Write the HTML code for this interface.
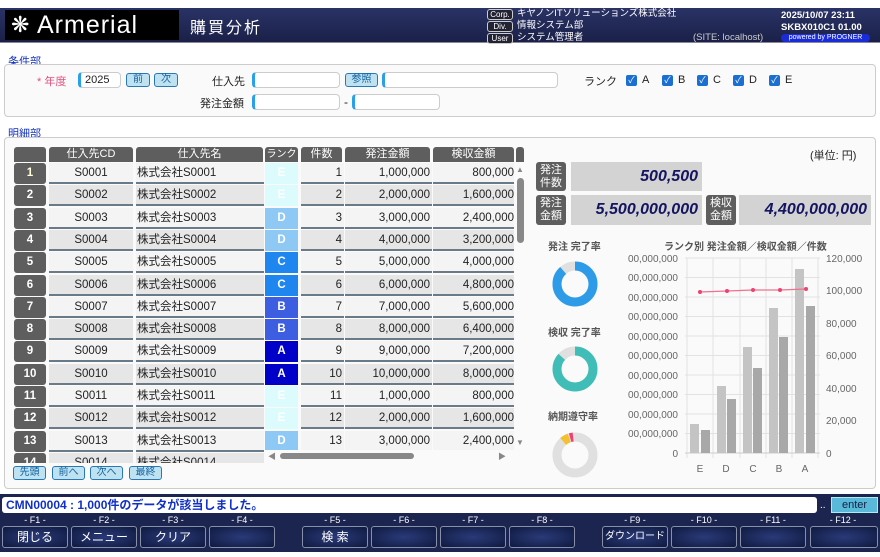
<!DOCTYPE html>
<html><head><meta charset="utf-8"><style>
*{box-sizing:border-box;margin:0;padding:0}
body{width:880px;height:557px;overflow:hidden;background:#fff;font-family:"Liberation Sans","Noto Sans CJK JP",sans-serif;font-size:12px;color:#222;position:relative}
.a{position:absolute}
.hdr{left:0;top:8px;width:880px;height:35px;background:linear-gradient(#2a3366,#1a2048);border-bottom:1px solid #889}
.logo{left:5px;top:10px;width:174px;height:30px;background:#000;color:#fff;font-size:25px;line-height:30px;padding-left:32px;letter-spacing:1px}
.ttl{left:190px;top:14px;color:#fff;font-size:16px;letter-spacing:2px}
.tag{left:487px;width:26px;height:11px;border:1px solid #ccc;border-radius:3px;color:#fff;font-size:8px;line-height:9px;text-align:center;background:#223}
.ht{color:#fff;font-size:9.5px;line-height:11px}
.sec{border:1px solid #ccc;border-radius:4px;background:#fafafa}
.lbl{color:#1030c0;font-size:11px}
.inp{height:16px;border:1px solid #ccc;border-left:3px solid #2aa0e8;border-radius:4px;background:#fff;font-size:11px;line-height:14px;padding-left:4px}
.btn{height:14px;border:1px solid #2878b8;border-radius:3px;background:#bfe2f0;color:#1060a0;font-size:10px;line-height:12px;text-align:center}
.cb{width:11px;height:11px;background:#1a6fd0;border-radius:2px;color:#fff;font-size:9px;line-height:11px;text-align:center}
.th{top:147px;height:15px;background:#5e5e5e;color:#fff;text-align:center;font-size:11px;line-height:15px;border-radius:3px 3px 0 0;overflow:hidden;white-space:nowrap}
.r{left:14px;width:500px;height:21px;font-size:11.5px}
.r div{position:absolute;top:0;height:21px;line-height:21px}
.n{left:0;width:32px;background:#5e5e5e;color:#fff;text-align:center;font-weight:bold;border-radius:3px}
.c1{left:35px;width:84px;text-align:center}
.c2{left:122px;width:128px;padding-left:1px}
.c3{left:251px;width:33px;text-align:center;color:#fff;font-weight:bold}
.c4{left:287px;width:43px;text-align:right;padding-right:2px}
.c5{left:331px;width:87px;text-align:right;padding-right:2px}
.c6{left:419px;width:81px;text-align:right;white-space:nowrap;overflow:hidden}
.ev{background:#f4f4f4}.od{background:#e6e6e6}
.line{border-bottom:2px solid #6a7a88}
.E{background:#dcfbfd}.D{background:#8ec9f6}.C{background:#1f86f0}.B{background:#3d5ee0}.A{background:#0000c8}
.kl{background:#5e5e5e;color:#fff;font-size:11px;line-height:13px;text-align:center;border-radius:3px;padding-top:2px}
.kv{background:#d3d3d3;color:#141460;font-weight:bold;font-style:italic;font-size:16px;text-align:right;padding-right:4px}
.fk{top:526px;height:22px;border:1px solid #8890a8;border-radius:3px;background:radial-gradient(#2a3a78,#0f1a40);color:#fff;font-size:12px;line-height:20px;text-align:center;white-space:nowrap;overflow:hidden}
.fl{top:515px;color:#fff;font-size:9px;text-align:center;width:66px}
</style></head><body>
<div class="a hdr"></div>
<div class="a logo"><span class="a" style="left:6px;top:0;font-size:22px">❋</span>Armerial</div>
<div class="a ttl">購買分析</div>
<div class="a tag" style="top:9px">Corp.</div><div class="a tag" style="top:21px">Div.</div><div class="a tag" style="top:33px">User</div>
<div class="a ht" style="left:517px;top:8px">キヤノンITソリューションズ株式会社</div>
<div class="a ht" style="left:517px;top:20px">情報システム部</div>
<div class="a ht" style="left:517px;top:32px">システム管理者</div>
<div class="a ht" style="left:693px;top:32px;color:#ccc">(SITE: localhost)</div>
<div class="a ht" style="left:781px;top:10px;font-weight:bold">2025/10/07 23:11</div>
<div class="a ht" style="left:781px;top:22px;font-weight:bold">SKBX010C1 01.00</div>
<div class="a" style="left:781px;top:34px;width:89px;height:8px;background:#1a2cd8;border-radius:4px;color:#fff;font-size:7px;line-height:8px;text-align:center">powered by PROGNER</div>

<div class="a lbl" style="left:8px;top:53px">条件部</div>
<div class="a sec" style="left:4px;top:64px;width:872px;height:53px"></div>
<div class="a" style="left:37px;top:73px;color:#e05080;font-size:11px">* 年度</div>
<div class="a inp" style="left:78px;top:72px;width:43px">2025</div>
<div class="a btn" style="left:126px;top:73px;width:24px">前</div>
<div class="a btn" style="left:154px;top:73px;width:24px">次</div>
<div class="a" style="left:212px;top:73px;font-size:11px">仕入先</div>
<div class="a inp" style="left:252px;top:72px;width:88px"></div>
<div class="a btn" style="left:345px;top:73px;width:33px">参照</div>
<div class="a inp" style="left:382px;top:72px;width:176px"></div>
<div class="a" style="left:584px;top:73px;font-size:11px">ランク</div>
<div class="a cb" style="left:626px;top:75px">✓</div><div class="a" style="left:642px;top:74px;font-size:11px">A</div>
<div class="a cb" style="left:662px;top:75px">✓</div><div class="a" style="left:678px;top:74px;font-size:11px">B</div>
<div class="a cb" style="left:697px;top:75px">✓</div><div class="a" style="left:713px;top:74px;font-size:11px">C</div>
<div class="a cb" style="left:733px;top:75px">✓</div><div class="a" style="left:749px;top:74px;font-size:11px">D</div>
<div class="a cb" style="left:769px;top:75px">✓</div><div class="a" style="left:785px;top:74px;font-size:11px">E</div>
<div class="a" style="left:200px;top:95px;font-size:11px">発注金額</div>
<div class="a inp" style="left:252px;top:94px;width:88px"></div>
<div class="a" style="left:344px;top:95px">-</div>
<div class="a inp" style="left:352px;top:94px;width:88px"></div>

<div class="a lbl" style="left:8px;top:125px">明細部</div>
<div class="a sec" style="left:4px;top:137px;width:872px;height:352px"></div>
<div class="a th" style="left:14px;width:32px"></div>
<div class="a th" style="left:49px;width:84px">仕入先CD</div>
<div class="a th" style="left:136px;width:127px">仕入先名</div>
<div class="a th" style="left:265px;width:33px;font-size:10px">ランク</div>
<div class="a th" style="left:301px;width:41px">件数</div>
<div class="a th" style="left:345px;width:85px">発注金額</div>
<div class="a th" style="left:433px;width:81px">検収金額</div>
<div class="a th" style="left:516px;width:8px"></div>

<div class="a" style="left:0;top:163px;width:530px;height:300px;overflow:hidden">
<div class="a r" style="top:0"><div class="n" style="color:#ffd">1</div><div class="c1 ev line">S0001</div><div class="c2 ev line">株式会社S0001</div><div class="c3 E">E</div><div class="c4 ev line">1</div><div class="c5 ev line">1,000,000</div><div class="c6 ev line">800,000</div></div>
<div class="a r" style="top:22.3px"><div class="n">2</div><div class="c1 od line">S0002</div><div class="c2 od line">株式会社S0002</div><div class="c3 E">E</div><div class="c4 od line">2</div><div class="c5 od line">2,000,000</div><div class="c6 od line">1,600,000</div></div>
<div class="a r" style="top:44.6px"><div class="n">3</div><div class="c1 ev line">S0003</div><div class="c2 ev line">株式会社S0003</div><div class="c3 D">D</div><div class="c4 ev line">3</div><div class="c5 ev line">3,000,000</div><div class="c6 ev line">2,400,000</div></div>
<div class="a r" style="top:66.9px"><div class="n">4</div><div class="c1 od line">S0004</div><div class="c2 od line">株式会社S0004</div><div class="c3 D">D</div><div class="c4 od line">4</div><div class="c5 od line">4,000,000</div><div class="c6 od line">3,200,000</div></div>
<div class="a r" style="top:89.2px"><div class="n">5</div><div class="c1 ev line">S0005</div><div class="c2 ev line">株式会社S0005</div><div class="c3 C">C</div><div class="c4 ev line">5</div><div class="c5 ev line">5,000,000</div><div class="c6 ev line">4,000,000</div></div>
<div class="a r" style="top:111.5px"><div class="n">6</div><div class="c1 od line">S0006</div><div class="c2 od line">株式会社S0006</div><div class="c3 C">C</div><div class="c4 od line">6</div><div class="c5 od line">6,000,000</div><div class="c6 od line">4,800,000</div></div>
<div class="a r" style="top:133.8px"><div class="n">7</div><div class="c1 ev line">S0007</div><div class="c2 ev line">株式会社S0007</div><div class="c3 B">B</div><div class="c4 ev line">7</div><div class="c5 ev line">7,000,000</div><div class="c6 ev line">5,600,000</div></div>
<div class="a r" style="top:156.1px"><div class="n">8</div><div class="c1 od line">S0008</div><div class="c2 od line">株式会社S0008</div><div class="c3 B">B</div><div class="c4 od line">8</div><div class="c5 od line">8,000,000</div><div class="c6 od line">6,400,000</div></div>
<div class="a r" style="top:178.4px"><div class="n">9</div><div class="c1 ev line">S0009</div><div class="c2 ev line">株式会社S0009</div><div class="c3 A">A</div><div class="c4 ev line">9</div><div class="c5 ev line">9,000,000</div><div class="c6 ev line">7,200,000</div></div>
<div class="a r" style="top:200.7px"><div class="n">10</div><div class="c1 od line">S0010</div><div class="c2 od line">株式会社S0010</div><div class="c3 A">A</div><div class="c4 od line">10</div><div class="c5 od line">10,000,000</div><div class="c6 od line">8,000,000</div></div>
<div class="a r" style="top:223px"><div class="n">11</div><div class="c1 ev line">S0011</div><div class="c2 ev line">株式会社S0011</div><div class="c3 E">E</div><div class="c4 ev line">11</div><div class="c5 ev line">1,000,000</div><div class="c6 ev line">800,000</div></div>
<div class="a r" style="top:245.3px"><div class="n">12</div><div class="c1 od line">S0012</div><div class="c2 od line">株式会社S0012</div><div class="c3 E">E</div><div class="c4 od line">12</div><div class="c5 od line">2,000,000</div><div class="c6 od line">1,600,000</div></div>
<div class="a r" style="top:267.6px"><div class="n">13</div><div class="c1 ev line">S0013</div><div class="c2 ev line">株式会社S0013</div><div class="c3 D">D</div><div class="c4 ev line">13</div><div class="c5 ev line">3,000,000</div><div class="c6 ev line">2,400,000</div></div>
<div class="a r" style="top:289.9px"><div class="n">14</div><div class="c1 od">S0014</div><div class="c2 od">株式会社S0014</div></div>
<div class="a" style="left:264px;top:287px;width:262px;height:13px;background:#fafafa"></div>
</div>
<div class="a" style="left:516px;top:165px;font-size:8px;color:#888">▲</div>
<div class="a" style="left:517px;top:178px;width:7px;height:65px;background:#888;border-radius:4px"></div>
<div class="a" style="left:516px;top:438px;font-size:8px;color:#888">▼</div>
<div class="a" style="left:268px;top:451px;font-size:8px;color:#888">◀</div>
<div class="a" style="left:280px;top:453px;width:134px;height:6px;background:#888;border-radius:3px"></div>
<div class="a" style="left:498px;top:451px;font-size:8px;color:#888">▶</div>
<div class="a btn" style="left:13px;top:466px;width:33px">先頭</div>
<div class="a btn" style="left:52px;top:466px;width:33px">前へ</div>
<div class="a btn" style="left:90px;top:466px;width:33px">次へ</div>
<div class="a btn" style="left:129px;top:466px;width:33px">最終</div>

<div class="a" style="left:810px;top:147px;font-size:11px">(単位: 円)</div>
<div class="a kl" style="left:536px;top:162px;width:30px;height:29px">発注<br>件数</div>
<div class="a kv" style="left:571px;top:162px;width:131px;height:29px;line-height:29px">500,500</div>
<div class="a kl" style="left:536px;top:195px;width:30px;height:30px">発注<br>金額</div>
<div class="a kv" style="left:571px;top:195px;width:131px;height:30px;line-height:30px">5,500,000,000</div>
<div class="a kl" style="left:706px;top:195px;width:30px;height:30px">検収<br>金額</div>
<div class="a kv" style="left:739px;top:195px;width:132px;height:30px;line-height:30px">4,400,000,000</div>
<div class="a" style="left:548px;top:238px;font-size:10px;font-weight:bold;color:#555">発注 完了率</div>
<div class="a" style="left:548px;top:324px;font-size:10px;font-weight:bold;color:#555">検収 完了率</div>
<div class="a" style="left:548px;top:408px;font-size:10px;font-weight:bold;color:#555">納期遵守率</div>
<div class="a" style="left:664px;top:238px;font-size:10px;font-weight:bold;color:#555">ランク別 発注金額／検収金額／件数</div>
<svg class="a" style="left:530px;top:250px" width="350" height="230" viewBox="530 250 350 230">
<g fill="none" stroke-width="9">
<circle cx="575" cy="284" r="18" stroke="#e0e0e0"/>
<circle cx="575" cy="284" r="18" stroke="#2d9be8" stroke-dasharray="100 113" transform="rotate(-90 575 284)"/>
<circle cx="575" cy="369" r="18" stroke="#e0e0e0"/>
<circle cx="575" cy="369" r="18" stroke="#3fbdb6" stroke-dasharray="98 113" transform="rotate(-90 575 369)"/>
<circle cx="575" cy="455" r="18" stroke="#e0e0e0"/>
<circle cx="575" cy="455" r="18" stroke="#f5c030" stroke-dasharray="0 100 7 10" transform="rotate(-90 575 455)"/>
<circle cx="575" cy="455" r="18" stroke="#f04070" stroke-dasharray="0 108 3 10" transform="rotate(-90 575 455)"/>
</g>
<g stroke="#e2e2e2" stroke-width="1">
<line x1="685" y1="258" x2="820" y2="258"/><line x1="685" y1="277.5" x2="820" y2="277.5"/><line x1="685" y1="297" x2="820" y2="297"/><line x1="685" y1="316.5" x2="820" y2="316.5"/><line x1="685" y1="336" x2="820" y2="336"/><line x1="685" y1="355.5" x2="820" y2="355.5"/><line x1="685" y1="375" x2="820" y2="375"/><line x1="685" y1="394.5" x2="820" y2="394.5"/><line x1="685" y1="414" x2="820" y2="414"/><line x1="685" y1="433.5" x2="820" y2="433.5"/>
<line x1="687" y1="258" x2="687" y2="458"/><line x1="713" y1="258" x2="713" y2="458"/><line x1="740" y1="258" x2="740" y2="458"/><line x1="766" y1="258" x2="766" y2="458"/><line x1="792" y1="258" x2="792" y2="458"/><line x1="818" y1="258" x2="818" y2="458"/>
</g>
<line x1="685" y1="453" x2="820" y2="453" stroke="#ccc"/>
<g fill="#c4c4c4"><rect x="690" y="424" width="9" height="29"/><rect x="717" y="386" width="9" height="67"/><rect x="743" y="347" width="9" height="106"/><rect x="769" y="308" width="9" height="145"/><rect x="795" y="269" width="9" height="184"/></g>
<g fill="#a8a8a8"><rect x="701" y="430" width="9" height="23"/><rect x="727" y="399" width="9" height="54"/><rect x="753" y="368" width="9" height="85"/><rect x="779" y="337" width="9" height="116"/><rect x="806" y="306" width="9" height="147"/></g>
<polyline points="700,292 727,291 753,290 780,290 806,289" fill="none" stroke="#f07090" stroke-width="1.2"/>
<g fill="#f04070"><circle cx="700" cy="292" r="2"/><circle cx="727" cy="291" r="2"/><circle cx="753" cy="290" r="2"/><circle cx="780" cy="290" r="2"/><circle cx="806" cy="289" r="2"/></g>
<g font-family="Liberation Sans" font-size="10" fill="#666" text-anchor="end">
<text x="678" y="262">00,000,000</text><text x="678" y="281">00,000,000</text><text x="678" y="301">00,000,000</text><text x="678" y="320">00,000,000</text><text x="678" y="340">00,000,000</text><text x="678" y="359">00,000,000</text><text x="678" y="379">00,000,000</text><text x="678" y="398">00,000,000</text><text x="678" y="418">00,000,000</text><text x="678" y="437">00,000,000</text><text x="678" y="457">0</text>
</g>
<g font-family="Liberation Sans" font-size="10" fill="#666">
<text x="826" y="262">120,000</text><text x="826" y="294">100,000</text><text x="826" y="327">80,000</text><text x="826" y="359">60,000</text><text x="826" y="392">40,000</text><text x="826" y="424">20,000</text><text x="826" y="457">0</text>
</g>
<g font-family="Liberation Sans" font-size="10" fill="#666" text-anchor="middle">
<text x="700" y="472">E</text><text x="726" y="472">D</text><text x="753" y="472">C</text><text x="779" y="472">B</text><text x="805" y="472">A</text>
</g>
</svg>

<div class="a" style="left:0;top:494px;width:880px;height:58px;background:#1c2550"></div>
<div class="a" style="left:2px;top:497px;width:815px;height:16px;background:#fff;border-radius:3px;color:#1030c8;font-weight:bold;font-size:12px;line-height:16px;padding-left:4px">CMN00004 : 1,000件のデータが該当しました。</div>
<div class="a" style="left:820px;top:500px;color:#fff;font-size:10px">..</div>
<div class="a" style="left:831px;top:497px;width:47px;height:16px;background:#5ab8d8;border:1px solid #aee;color:#124;font-size:11px;line-height:14px;text-align:center">enter</div>
<div class="a fl" style="left:2px">- F1 -</div><div class="a fl" style="left:71px">- F2 -</div><div class="a fl" style="left:140px">- F3 -</div><div class="a fl" style="left:209px">- F4 -</div><div class="a fl" style="left:302px">- F5 -</div><div class="a fl" style="left:371px">- F6 -</div><div class="a fl" style="left:440px">- F7 -</div><div class="a fl" style="left:509px">- F8 -</div><div class="a fl" style="left:602px">- F9 -</div><div class="a fl" style="left:671px">- F10 -</div><div class="a fl" style="left:740px">- F11 -</div><div class="a fl" style="left:810px">- F12 -</div>
<div class="a fk" style="left:2px;width:66px">閉じる</div><div class="a fk" style="left:71px;width:66px">メニュー</div><div class="a fk" style="left:140px;width:66px">クリア</div><div class="a fk" style="left:209px;width:66px"></div>
<div class="a fk" style="left:302px;width:66px">検 索</div><div class="a fk" style="left:371px;width:66px"></div><div class="a fk" style="left:440px;width:66px"></div><div class="a fk" style="left:509px;width:66px"></div>
<div class="a fk" style="left:602px;width:66px;font-size:10px">ダウンロード</div><div class="a fk" style="left:671px;width:66px"></div><div class="a fk" style="left:740px;width:66px"></div><div class="a fk" style="left:810px;width:68px"></div>
</body></html>
